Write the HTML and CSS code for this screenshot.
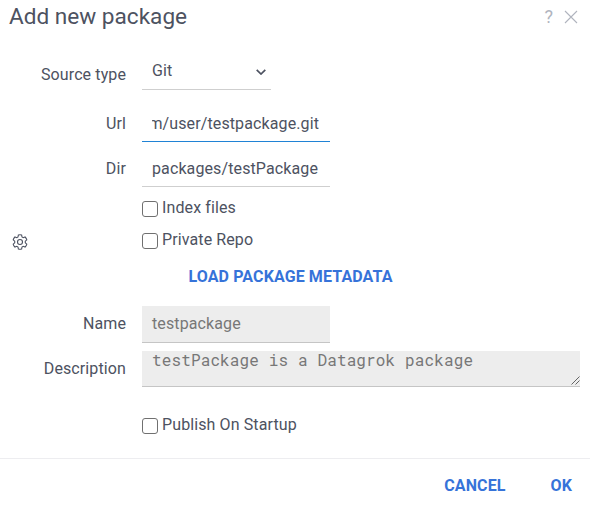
FILE: index.html
```html
<!DOCTYPE html>
<html lang="en">
<head>
<meta charset="utf-8">
<title>Add new package</title>
<link rel="stylesheet" href="styles.css">
</head>
<body>
<div class="dialog">
  <header class="header">
    <h1 class="title">Add new package</h1>
    <span class="help">?</span>
    <svg class="close" viewBox="0 0 14 14"><path d="M1 1L13 13M13 1L1 13"/></svg>
  </header>
  <main class="form">
    <div class="row row-source">
      <label class="label">Source type</label>
      <div class="field select"><span>Git</span><svg class="chevron" viewBox="0 0 10 6"><path d="M.7.8L5 5L9.3.8"/></svg></div>
    </div>
    <div class="row row-url">
      <label class="label">Url</label>
      <div class="field focused"><div class="clip"><span>m/user/testpackage.git</span></div></div>
    </div>
    <div class="row row-dir">
      <label class="label">Dir</label>
      <div class="field"><span>packages/testPackage</span></div>
    </div>
    <div class="check check-index"><i class="box"></i><span>Index files</span></div>
    <div class="check check-private">
      <svg class="gear" viewBox="0 0 16 16"><path d="M6.4 1Q8 .4 9.6 1L10 3L11.2 3.7L13.1 3Q14.4 4.200 14.800 5.900L13.300 7.200V8.800L14.800 10.100Q14.400 11.800 13.100 13L11.200 12.300L10 13L9.600 15Q8 15.600 6.400 15L6 13L4.800 12.300L2.900 13Q1.600 11.800 1.200 10.100L2.700 8.800V7.200L1.200 5.900Q1.600 4.200 2.900 3L4.800 3.700L6 3Z"/><circle cx="8" cy="8" r="2.500"/></svg>
      <i class="box"></i><span>Private Repo</span>
    </div>
    <div class="load"><span class="action">LOAD PACKAGE METADATA</span></div>
    <div class="row row-name">
      <label class="label">Name</label>
      <div class="field disabled"><span>testpackage</span></div>
    </div>
    <div class="row row-desc">
      <label class="label">Description</label>
      <div class="field disabled area"><span>testPackage is a Datagrok package</span><svg class="grip" viewBox="0 0 9 9"><path d="M.5 8.500L8.500 .5M4.500 8.500L8.500 4.500"/></svg></div>
    </div>
    <div class="check check-publish"><i class="box"></i><span>Publish On Startup</span></div>
  </main>
  <footer class="footer"><span class="action">CANCEL</span><span class="action">OK</span></footer>
</div>
</body>
</html>
```
FILE: styles.css
```css
* { box-sizing: border-box; }
body {
  margin: 0;
  background: #fff;
  color: #4d5261;
  font: 16px/20px Roboto, sans-serif;
  letter-spacing: .11px;
}
.dialog { width: 590px; height: 506px; display: flex; flex-direction: column; overflow: hidden; }
.header { height: 33px; display: flex; align-items: center; padding: 0 12px 0 9px; flex: none; }
.title { margin: 0; flex: 1; font-size: 22.6px; font-weight: 400; line-height: 32px; letter-spacing: 0; }
.help { color: #b0b4be; font-size: 18px; margin-right: 11px; }
.close { width: 14px; height: 14px; fill: none; stroke: #b0b4be; stroke-width: 1.1; }
.form { flex: 1; }
.row { display: flex; }
.label { width: 126px; margin-right: 16px; text-align: right; }
.field { position: relative; width: 188px; height: 37px; padding: 8px 10px 0; border-bottom: 1px solid #cfcfcf; white-space: nowrap; }
.row-source { margin-top: 20px; }
.row-source .label { padding-top: 12px; }
.select { width: 129px; display: flex; justify-content: space-between; padding-right: 5px; }
.chevron { width: 10px; height: 6px; margin-top: 8px; fill: none; stroke: #4d5261; stroke-width: 1.7; }
.row-url { margin-top: 15px; }
.row-url .label, .row-dir .label { padding-top: 9px; }
.row-url .field, .row-dir .field { padding-top: 9px; }
.row-url .focused { border-color: #2083d5; padding-right: 11px; }
.clip { display: flex; justify-content: flex-end; overflow: hidden; }
.row-dir { margin-top: 8px; }
.check { display: flex; height: 20px; padding-left: 142px; position: relative; }
.box { width: 16px; height: 16px; margin: 3px 4px 0 0; border: 1px solid #707070; border-radius: 3px; }
.check-index { margin-top: 11px; }
.check-private { margin-top: 12px; }
.gear { position: absolute; left: 12px; top: 4px; width: 16px; height: 16px; fill: none; stroke: #4d5261; stroke-width: 1.1; }
.load { margin-top: 17px; padding-left: 188.5px; }
.action { color: #3673d9; font-weight: 700; }
.row-name { margin-top: 19px; }
.row-name .label, .row-name .field { padding-top: 8px; }
.disabled { background: #ededed; color: #777; border-color: #c5c5c5; }
.row-desc { margin-top: 8px; }
.row-desc .label { padding-top: 8px; }
.area { width: 438px; height: 36px; padding-top: 0; line-height: 18px; font-family: "Roboto Mono", "Liberation Mono", monospace; letter-spacing: .13px; }
.grip { position: absolute; right: 0; bottom: 1px; width: 9px; height: 9px; fill: none; stroke: #555; stroke-width: .9; }
.check-publish { margin-top: 28px; }
.footer { height: 48px; flex: none; display: flex; justify-content: flex-end; gap: 45px; padding: 17px 18px 0 0; border-top: 1px solid #ededf0; }
```
